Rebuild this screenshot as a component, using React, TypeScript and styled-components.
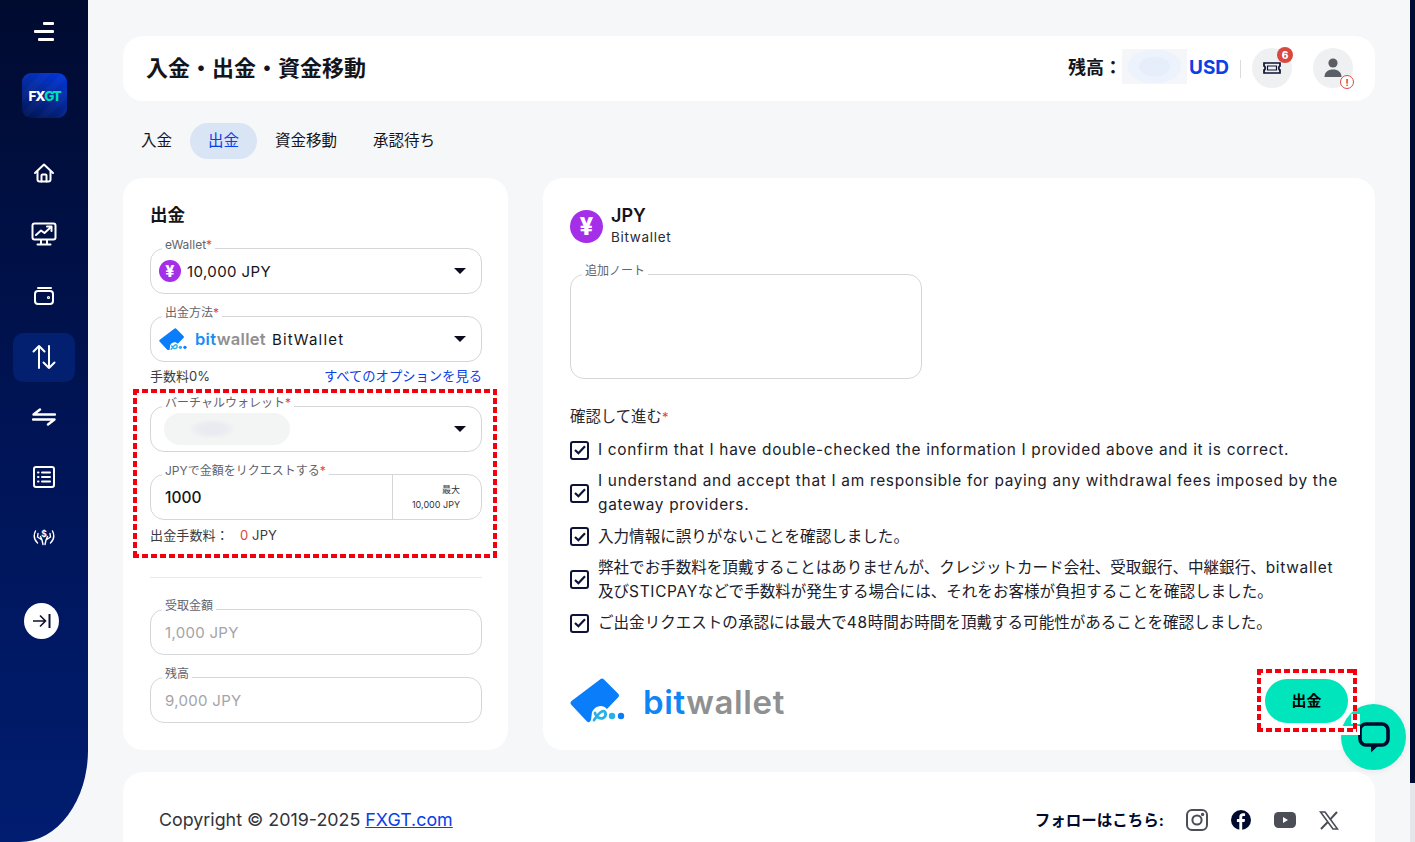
import React from "react";
import styled, { createGlobalStyle, css } from "styled-components";

const fontStack = `"Inter", "Noto Sans CJK JP", "Noto Sans", sans-serif`;

const GlobalStyle = createGlobalStyle`
  html, body {
    margin: 0;
    height: 100%;
    overflow: hidden;
    background: #f6f7f9;
  }
  * {
    box-sizing: border-box;
  }
  body {
    font-family: ${fontStack};
    color: #14141c;
  }
`;

// the square red dashes that mark up the screenshot
const redDashes = css`
  background:
    repeating-linear-gradient(90deg, #f3000f 0 6px, transparent 6px 9px) top / 100% 4px no-repeat,
    repeating-linear-gradient(90deg, #f3000f 0 6px, transparent 6px 9px) bottom / 100% 4px no-repeat,
    repeating-linear-gradient(180deg, #f3000f 0 6px, transparent 6px 9px) left / 4px 100% no-repeat,
    repeating-linear-gradient(180deg, #f3000f 0 6px, transparent 6px 9px) right / 4px 100% no-repeat;
`;

const Page = styled.div`
  display: flex;
  height: 842px;
  overflow: hidden;
  position: relative;
`;

const Sidebar = styled.aside`
  width: 88px;
  height: 842px;
  flex: none;
  display: flex;
  flex-direction: column;
  background: linear-gradient(to bottom, #000b30 0%, #001455 50%, #011d70 100%);
  border-bottom-right-radius: 68px 92px;
`;

const Burger = styled.button`
  all: unset;
  display: flex;
  flex-direction: column;
  align-items: flex-end;
  gap: 5px;
  width: 20px;
  margin: 22px 0 0 34px;
`;

const BurgerLine = styled.span<{ $w: number }>`
  display: block;
  width: ${(p) => p.$w}px;
  height: 3px;
  background: #fff;
  border-radius: 1px;
`;

const LogoTile = styled.div`
  width: 45px;
  height: 45px;
  margin: 32px 0 0 22px;
  border-radius: 9px;
  background:
    repeating-linear-gradient(135deg, rgba(255, 255, 255, 0.025) 0 7px, transparent 7px 14px),
    linear-gradient(205deg, #0037e0 0%, #042a9e 45%, #00124f 100%);
  display: flex;
  align-items: center;
  justify-content: center;
  font-size: 13.5px;
  font-weight: 800;
  letter-spacing: -1.3px;
  color: #fff;
  em {
    font-style: normal;
    color: #00e0b5;
  }
`;

const Nav = styled.nav`
  display: flex;
  flex-direction: column;
  gap: 11px;
  margin-top: 30px;
  padding: 0 13px;
`;

const NavItem = styled.a<{ $active?: boolean }>`
  height: 49px;
  flex: none;
  border-radius: 10px;
  display: flex;
  align-items: center;
  justify-content: center;
  color: #fff;
  background: ${(p) => (p.$active ? "#02206f" : "transparent")};
  &:nth-child(-n + 3) {
    margin-bottom: 1.5px;
  }
`;

const CollapseButton = styled.button`
  all: unset;
  width: 35px;
  height: 36px;
  margin: 41px 0 0 24px;
  border-radius: 50%;
  background: #fff;
  display: flex;
  align-items: center;
  justify-content: center;
`;

const Main = styled.main`
  flex: 1;
  min-width: 0;
  padding: 36px 40px 0 35px;
  display: flex;
  flex-direction: column;
`;

const Header = styled.header`
  height: 65px;
  flex: none;
  background: #fff;
  border-radius: 20px;
  padding: 0 22px 0 23px;
  display: flex;
  align-items: center;
`;

const PageTitle = styled.h1`
  flex: 1;
  margin: 0;
  padding-bottom: 6px;
  font-size: 22px;
  font-weight: 700;
`;

const BalanceLabel = styled.span`
  font-size: 18px;
  font-weight: 700;
  width: 54px;
  white-space: nowrap;
  padding-bottom: 6px;
`;

const HiddenBalance = styled.div`
  width: 65px;
  height: 35px;
  margin-bottom: 4px;
  background:
    radial-gradient(ellipse 27px 17px at center, #e7eefb 0, #e7eefb 55%, #edf3fd 60%, #edf3fd 99%, transparent 100%),
    #f5f6f9;
`;

const Currency = styled.span`
  font-size: 19px;
  font-weight: 700;
  color: #0b40e6;
  margin-left: 2px;
  width: 40px;
  padding-bottom: 3px;
`;

const VDivider = styled.span`
  width: 1px;
  height: 18px;
  background: #d9dbdf;
  margin: 0 11px 0 11px;
`;

const RoundIcon = styled.div`
  position: relative;
  width: 40px;
  height: 40px;
  margin-bottom: 1px;
  border-radius: 50%;
  background: #eff0f2;
  display: flex;
  align-items: center;
  justify-content: center;
`;

const Badge = styled.span`
  position: absolute;
  top: -1px;
  right: -1px;
  width: 16px;
  height: 16px;
  border-radius: 50%;
  background: #d9473f;
  color: #fff;
  font-size: 10px;
  font-weight: 800;
  display: flex;
  align-items: center;
  justify-content: center;
`;

const AlertDot = styled.span`
  position: absolute;
  right: -1px;
  bottom: -1px;
  width: 14px;
  height: 14px;
  border-radius: 50%;
  background: #fff;
  border: 1.5px solid #dc4a43;
  color: #dc4a43;
  font-size: 9px;
  font-weight: 800;
  display: flex;
  align-items: center;
  justify-content: center;
`;

const ProfileGap = styled.div`
  width: 21px;
`;

const Tabs = styled.div`
  display: flex;
  margin-top: 22px;
`;

const Tab = styled.a<{ $active?: boolean }>`
  height: 36px;
  padding: 0 18px 4px;
  border-radius: 18px;
  display: flex;
  align-items: center;
  font-size: 15.5px;
  color: ${(p) => (p.$active ? "#0b40e6" : "#14141c")};
  background: ${(p) => (p.$active ? "#d9e4f5" : "transparent")};
`;

const Columns = styled.div`
  display: flex;
  gap: 35px;
  margin-top: 19px;
`;

const Card = styled.section`
  background: #fff;
  border-radius: 20px;
`;

const LeftCard = styled(Card)`
  width: 385px;
  height: 572px;
  flex: none;
  padding: 27px 26px 0 27px;
`;

const CardTitle = styled.h2`
  margin: 0 0 16px;
  font-size: 17.5px;
  line-height: 20px;
  font-weight: 700;
`;

const Field = styled.fieldset<{ $mt?: number }>`
  margin: ${(p) => p.$mt ?? 15}px 0 0;
  padding: 0;
  border: 1px solid #d5d6d8;
  border-radius: 14px;
  min-width: 0;
`;

const Legend = styled.legend`
  position: relative;
  top: -3px;
  margin-left: 11px;
  padding: 0 3px;
  font-size: 12px;
  line-height: 14px;
  color: #63636b;
  i {
    color: #d9473f;
    font-style: normal;
  }
`;

const SelectRow = styled.div`
  height: 41px;
  padding: 0 15px 3px 8px;
  display: flex;
  align-items: center;
  gap: 6px;
  font-size: 15px;
  letter-spacing: 0.4px;
  margin-top: -3px;
`;

const WideText = styled.span`
  letter-spacing: 1.2px;
`;

const Caret = styled.span`
  margin-left: auto;
  width: 0;
  height: 0;
  border-left: 6px solid transparent;
  border-right: 6px solid transparent;
  border-top: 6px solid #0c0c20;
`;

const YenCircle = styled.span<{ $size: number }>`
  flex: none;
  width: ${(p) => p.$size}px;
  height: ${(p) => p.$size}px;
  border-radius: 50%;
  background: #a52ee8;
  color: #fff;
  font-weight: 800;
  font-size: ${(p) => Math.round(p.$size * 0.72)}px;
  display: flex;
  align-items: center;
  justify-content: center;
`;

const MiniWordmark = styled.span`
  font-size: 16.5px;
  font-weight: 600;
  letter-spacing: 0.3px;
  color: #8f9092;
  margin-left: 2px;
  b {
    color: #1b8cf5;
    font-weight: 600;
  }
`;

const FeeRow = styled.div`
  display: flex;
  justify-content: space-between;
  align-items: center;
  height: 16px;
  margin-top: 5px;
  font-size: 13px;
  color: #3a3a42;
  a {
    color: #0b40e6;
    font-size: 13.3px;
  }
`;

const Highlighted = styled.div`
  position: relative;
  margin-top: 16px;
  &::after {
    content: "";
    position: absolute;
    left: -17px;
    right: -15px;
    top: -10px;
    bottom: -15px;
    ${redDashes}
    pointer-events: none;
  }
`;

const BlurredValue = styled.div`
  width: 126px;
  height: 32px;
  margin-left: 5px;
  border-radius: 16px;
  background: radial-gradient(ellipse 24px 10px at 48px 50%, #e9ebf0 0 50%, #f3f4f4 100%);
`;

const AmountRow = styled.div`
  height: 45px;
  margin-top: -7px;
  display: flex;
  align-items: stretch;
`;

const AmountValue = styled.div`
  flex: 1;
  padding: 2px 0 0 14px;
  display: flex;
  align-items: center;
  font-size: 15.5px;
  font-weight: 500;
`;

const MaxBox = styled.div`
  width: 89px;
  border-left: 1px solid #d5d6d8;
  padding-right: 21px;
  display: flex;
  flex-direction: column;
  justify-content: center;
  align-items: flex-end;
  gap: 4px;
  font-size: 9px;
  line-height: 11px;
  color: #33333a;
`;

const WithdrawFee = styled.div`
  margin-top: 7px;
  font-size: 13px;
  line-height: 16px;
  letter-spacing: 0.15px;
  color: #3a3a42;
  b {
    margin-left: 11px;
    font-weight: 400;
    color: #d9473f;
  }
`;

const Divider = styled.hr`
  margin: 34px 0 24px;
  border: 0;
  border-top: 1px solid #e8e9eb;
`;

const ReadOnlyRow = styled.div`
  height: 41px;
  padding: 0 14px 3px;
  margin-top: -3px;
  display: flex;
  align-items: center;
  font-size: 15px;
  letter-spacing: 0.3px;
  color: #a3a4a8;
`;

const RightCard = styled(Card)`
  flex: 1;
  height: 572px;
  padding: 27px 27px 0;
  position: relative;
`;

const CurrencyHead = styled.div`
  display: flex;
  align-items: center;
  gap: 8px;
`;

const CurrencyName = styled.div`
  font-size: 18px;
  line-height: 22px;
  font-weight: 600;
`;

const CurrencySub = styled.div`
  font-size: 13.5px;
  line-height: 20px;
  letter-spacing: 0.7px;
  color: #2a2a32;
`;

const NoteField = styled(Field)`
  width: 352px;
  margin-top: 20px;
`;

const NoteBody = styled.div`
  height: 97px;
`;

const ConfirmTitle = styled.div`
  margin-top: 29px;
  font-size: 15.4px;
  line-height: 18px;
  color: #2a2a32;
  i {
    color: #d9473f;
    font-style: normal;
    font-size: 13px;
  }
`;

const ChecklistWrap = styled.div`
  display: flex;
  flex-direction: column;
  gap: 7.25px;
  margin-top: 12px;
`;

const CheckRow = styled.label`
  display: flex;
  align-items: center;
  gap: 9px;
  font-size: 15.55px;
  line-height: 24px;
  color: #20202a;
`;

const Latin = styled.span`
  font-size: 15.4px;
  letter-spacing: 0.7px;
`;

const CheckBox = styled.span`
  flex: none;
  width: 19px;
  height: 19px;
  border: 2px solid #0c1238;
  border-radius: 3px;
  display: flex;
  align-items: center;
  justify-content: center;
`;

const BottomRow = styled.div`
  display: flex;
  align-items: center;
  justify-content: space-between;
  margin-top: 43px;
`;

const BigLogo = styled.div`
  display: flex;
  align-items: center;
  gap: 18px;
`;

const BigWordmark = styled.span`
  padding-top: 2px;
  font-size: 33px;
  font-weight: 600;
  letter-spacing: 0.6px;
  color: #8f9092;
  b {
    color: #0f86f5;
    font-weight: 600;
  }
`;

const SubmitWrap = styled.div`
  position: relative;
  &::before {
    content: "";
    position: absolute;
    left: 75px;
    top: 35px;
    width: 20px;
    height: 21px;
    background:
      linear-gradient(#fff, #fff) right top / 9px 10px no-repeat,
      linear-gradient(#fff, #fff) left bottom / 100% 9px no-repeat;
    z-index: 3;
  }
  &::after {
    content: "";
    position: absolute;
    left: -8px;
    right: -9px;
    top: -10px;
    bottom: -9px;
    ${redDashes}
    pointer-events: none;
    z-index: 3;
  }
`;

const SubmitButton = styled.button`
  all: unset;
  width: 83px;
  height: 44px;
  padding-bottom: 3px;
  box-sizing: border-box;
  border-radius: 22px;
  background: #00e5bb;
  color: #000;
  font-size: 15px;
  font-weight: 700;
  display: flex;
  align-items: center;
  justify-content: center;
`;

const Footer = styled(Card)`
  height: 120px;
  flex: none;
  margin-top: 22px;
  padding: 33px 36px 0;
  display: flex;
  align-items: flex-start;
  justify-content: space-between;
`;

const Copyright = styled.div`
  font-size: 17.85px;
  line-height: 30px;
  color: #33333a;
  a {
    color: #0b40e6;
    text-decoration: underline;
  }
`;

const FollowRow = styled.div`
  display: flex;
  align-items: center;
  height: 30px;
  gap: 23px;
`;

const FollowLabel = styled.span`
  font-size: 15.5px;
  font-weight: 700;
  color: #000a2e;
  padding-bottom: 3px;
  margin-right: -1px;
`;

const ChatBubble = styled.div`
  position: absolute;
  left: 1341px;
  top: 704px;
  width: 65px;
  height: 66px;
  border-radius: 50%;
  background: #00e5bb;
  box-shadow: 0 1px 6px rgba(0, 0, 0, 0.08);
  display: flex;
  align-items: center;
  justify-content: center;
  z-index: 2;
`;

const ScrollTrack = styled.div`
  position: absolute;
  top: 0;
  right: 0;
  width: 5px;
  height: 842px;
  background: #e4e6ec;
`;

const ScrollThumb = styled.div`
  width: 5px;
  height: 783px;
  background: #000b30;
`;

const stroke = { fill: "none", stroke: "currentColor", strokeWidth: 2, strokeLinecap: "round", strokeLinejoin: "round" } as const;

const HomeIcon = () => (
  <svg width="22" height="22" viewBox="0 0 22 22" {...stroke}>
    <path d="M2 11 L11 2.5 L20 11" />
    <path d="M4.5 9.5 V17.5 a2 2 0 0 0 2 2 H15.5 a2 2 0 0 0 2-2 V9.5" />
    <path d="M8.5 19.5 V13.5 a1 1 0 0 1 1-1 h3 a1 1 0 0 1 1 1 V19.5" />
  </svg>
);

const MonitorIcon = () => (
  <svg width="26" height="24" viewBox="0 0 26 24" {...stroke}>
    <rect x="1.5" y="1.5" width="23" height="16" rx="2" />
    <path d="M5 13 L10 8.5 L13.5 11 L20 5" />
    <path d="M16 4.5 H20.5 V9" />
    <path d="M10 18 V22 M16 18 V22 M6.5 22.5 H19.5" />
  </svg>
);

const WalletIcon = () => (
  <svg width="22" height="20" viewBox="0 0 22 20" {...stroke}>
    <path d="M5 2 H18" />
    <rect x="2" y="5" width="18" height="13" rx="3" />
    <circle cx="15.5" cy="11.5" r="0.6" />
  </svg>
);

const TransferIcon = () => (
  <svg width="24" height="26" viewBox="0 0 24 26" {...stroke}>
    <path d="M7 24 V2 M1.5 7.5 L7 2 L12.5 7.5" />
    <path d="M17 2 V24 M11.5 18.5 L17 24 L22.5 18.5" />
  </svg>
);

const SwapIcon = () => (
  <svg width="24" height="18" viewBox="0 0 24 18" {...stroke} strokeWidth="2.4">
    <path d="M23 6.5 H1.5 L8 1.5" />
    <path d="M1 11.5 H22.5 L16 16.5" />
  </svg>
);

const ListIcon = () => (
  <svg width="24" height="24" viewBox="0 0 24 24" {...stroke}>
    <rect x="2" y="2" width="20" height="20" rx="2" />
    <path d="M10 7.5 H18 M10 12 H18 M10 16.5 H18" />
    <path d="M6 7.5 H6.5 M6 12 H6.5 M6 16.5 H6.5" />
  </svg>
);

const HandsIcon = () => (
  <svg width="22" height="17" viewBox="0 0 22 17" fill="none" stroke="currentColor" strokeWidth="1.4" strokeLinecap="round" strokeLinejoin="round">
    <path d="M2.5 2 C0.5 6 1 10.5 4.5 14" />
    <path d="M19.5 2 C21.5 6 21 10.5 17.5 14" />
    <path d="M5 4.5 L4.5 8 L9 11 L10 15.5 M9 11 L7.5 7.5" />
    <path d="M17 4.5 L17.5 8 L13 11 L12 15.5 M13 11 L14.5 7.5" />
    <text x="11" y="7.5" fontSize="8.5" fontWeight="700" fontFamily="Inter" textAnchor="middle" fill="currentColor" stroke="none">$</text>
  </svg>
);

const CollapseIcon = () => (
  <svg width="18" height="14" viewBox="0 0 18 14" fill="none" stroke="#0c1230" strokeWidth="1.6">
    <path d="M0 7 H12 M7 1.5 L12.5 7 L7 12.5" />
    <path d="M16.5 0 V14" strokeWidth="2" />
  </svg>
);

const TicketIcon = () => (
  <svg width="18" height="14" viewBox="0 0 18 14" fill="none" stroke="#0c1230" strokeWidth="1.7">
    <path d="M1 2 H17 V5 C15.5 5 15.5 9 17 9 V12 H1 V9 C2.5 9 2.5 5 1 5 Z" />
    <path d="M4.5 5 H13.5 V9 H4.5 Z" strokeWidth="1.2" />
  </svg>
);

const UserIcon = () => (
  <svg width="18" height="20" viewBox="0 0 18 20" fill="#5c5e66">
    <circle cx="9" cy="5" r="4.6" />
    <path d="M0.5 19 C0.5 14 4 11.5 9 11.5 C14 11.5 17.5 14 17.5 19 Z" />
  </svg>
);

const CheckMark = () => (
  <svg width="12" height="10" viewBox="0 0 12 10" fill="none" stroke="#0c1238" strokeWidth="2.2">
    <path d="M1 5 L4.4 8.2 L11 1.2" />
  </svg>
);

const BitwalletMark = ({ size }: { size: number }) => (
  <svg width={size} height={size * 0.82} viewBox="0 0 55 45">
    <path d="M30 1.5 Q32 -0.5 34 1.5 L48 15.5 Q50 17.5 48 19.5 L37 31 C33 26 25 27 22 34 L21 42 Q19 45.5 17 43.5 L1.5 27 Q-0.5 25 1.5 23 Z" fill="#0a7dfb" />
    <path d="M24 42 C27 38 30 33 33 33 C36 33 37 38 33 40 C30 41 26 39 25 35" fill="none" stroke="#27b1e8" strokeWidth="2.8" strokeLinecap="round" />
    <circle cx="42" cy="38" r="3.2" fill="#27b1e8" />
    <circle cx="51" cy="38" r="3.2" fill="#0a7dfb" />
  </svg>
);

const InstagramIcon = () => (
  <svg width="22" height="22" viewBox="0 0 22 22" fill="none" stroke="#4b4d57" strokeWidth="2">
    <rect x="1" y="1" width="20" height="20" rx="5" />
    <circle cx="11" cy="11" r="4.6" />
    <circle cx="16.6" cy="5.4" r="0.7" fill="#4b4d57" />
  </svg>
);

const FacebookIcon = () => (
  <svg width="20" height="20" viewBox="0 0 20 20">
    <circle cx="10" cy="10" r="10" fill="#000a2e" />
    <path d="M11.2 20 V12 H13.6 L14 9 H11.2 V7.4 C11.2 6.5 11.5 6 12.6 6 H14.1 V3.4 C13.6 3.3 12.8 3.2 11.9 3.2 C9.8 3.2 8.3 4.5 8.3 6.9 V9 H5.9 V12 H8.3 V20 Z" fill="#fff" />
  </svg>
);

const YoutubeIcon = () => (
  <svg width="22" height="16" viewBox="0 0 22 16">
    <rect width="22" height="16" rx="4.5" fill="#4b4d57" />
    <path d="M9 5 L14 8 L9 11 Z" fill="#fff" />
  </svg>
);

const XIcon = () => (
  <svg width="20" height="19" viewBox="0 0 20 19" fill="none" stroke="#4b4d57">
    <path d="M1.5 1 H6 L18.5 18 H14 Z" strokeWidth="1.6" />
    <path d="M18 1 L11 8.7 M9 10.8 L2 18" strokeWidth="2" />
  </svg>
);

const ChatIcon = () => (
  <svg width="32" height="31" viewBox="0 0 32 31" fill="none">
    <path d="M8 2 H24 A6 6 0 0 1 30 8 V17 A6 6 0 0 1 24 23 H8 A6 6 0 0 1 2 17 V8 A6 6 0 0 1 8 2 Z" stroke="#000a2e" strokeWidth="3.6" />
    <path d="M13 22 V30.5 L22 22 Z" fill="#000a2e" />
  </svg>
);

const checks: React.ReactNode[] = [
  <Latin key="a">I confirm that I have double-checked the information I provided above and it is correct.</Latin>,
  <Latin key="b">I understand and accept that I am responsible for paying any withdrawal fees imposed by the gateway providers.</Latin>,
  <span key="c">入力情報に誤りがないことを確認しました。</span>,
  <span key="d">
    弊社でお手数料を頂戴することはありませんが、クレジットカード会社、受取銀行、中継銀行、<Latin>bitwallet</Latin>
    <br />
    及び<Latin>STICPAY</Latin>などで手数料が発生する場合には、それをお客様が負担することを確認しました。
  </span>,
  <span key="e">
    ご出金リクエストの承認には最大で<Latin>48</Latin>時間お時間を頂戴する可能性があることを確認しました。
  </span>,
];

const navIcons = [
  <HomeIcon key="home" />,
  <MonitorIcon key="monitor" />,
  <WalletIcon key="wallet" />,
  <TransferIcon key="transfer" />,
  <SwapIcon key="swap" />,
  <ListIcon key="list" />,
  <HandsIcon key="hands" />,
];

export default function App() {
  return (
    <Page>
      <GlobalStyle />
      <Sidebar>
        <Burger>
          <BurgerLine $w={11} />
          <BurgerLine $w={20} />
          <BurgerLine $w={16} />
        </Burger>
        <LogoTile>
          FX<em>GT</em>
        </LogoTile>
        <Nav>
          {navIcons.map((icon, i) => (
            <NavItem key={i} $active={i === 3}>
              {icon}
            </NavItem>
          ))}
        </Nav>
        <CollapseButton>
          <CollapseIcon />
        </CollapseButton>
      </Sidebar>

      <Main>
        <Header>
          <PageTitle>入金・出金・資金移動</PageTitle>
          <BalanceLabel>残高：</BalanceLabel>
          <HiddenBalance />
          <Currency>USD</Currency>
          <VDivider />
          <RoundIcon>
            <TicketIcon />
            <Badge>6</Badge>
          </RoundIcon>
          <ProfileGap />
          <RoundIcon>
            <UserIcon />
            <AlertDot>!</AlertDot>
          </RoundIcon>
        </Header>

        <Tabs>
          <Tab>入金</Tab>
          <Tab $active>出金</Tab>
          <Tab>資金移動</Tab>
          <Tab>承認待ち</Tab>
        </Tabs>

        <Columns>
          <LeftCard>
            <CardTitle>出金</CardTitle>
            <Field $mt={0}>
              <Legend>
                eWallet<i>*</i>
              </Legend>
              <SelectRow>
                <YenCircle $size={22}>¥</YenCircle>
                10,000 JPY
                <Caret />
              </SelectRow>
            </Field>
            <Field>
              <Legend>
                出金方法<i>*</i>
              </Legend>
              <SelectRow>
                <BitwalletMark size={28} />
                <MiniWordmark>
                  <b>bit</b>wallet
                </MiniWordmark>
                <WideText>BitWallet</WideText>
                <Caret />
              </SelectRow>
            </Field>
            <FeeRow>
              <span>手数料0%</span>
              <a>すべてのオプションを見る</a>
            </FeeRow>
            <Highlighted>
              <Field $mt={0}>
                <Legend>
                  バーチャルウォレット<i>*</i>
                </Legend>
                <SelectRow>
                  <BlurredValue />
                  <Caret />
                </SelectRow>
              </Field>
              <Field>
                <Legend>
                  JPYで金額をリクエストする<i>*</i>
                </Legend>
                <AmountRow>
                  <AmountValue>1000</AmountValue>
                  <MaxBox>
                    <span>最大</span>
                    <span>10,000 JPY</span>
                  </MaxBox>
                </AmountRow>
              </Field>
              <WithdrawFee>
                出金手数料：<b>0</b> JPY
              </WithdrawFee>
            </Highlighted>
            <Divider />
            <Field $mt={0}>
              <Legend>受取金額</Legend>
              <ReadOnlyRow>1,000 JPY</ReadOnlyRow>
            </Field>
            <Field>
              <Legend>残高</Legend>
              <ReadOnlyRow>9,000 JPY</ReadOnlyRow>
            </Field>
          </LeftCard>

          <RightCard>
            <CurrencyHead>
              <YenCircle $size={33}>¥</YenCircle>
              <div>
                <CurrencyName>JPY</CurrencyName>
                <CurrencySub>Bitwallet</CurrencySub>
              </div>
            </CurrencyHead>
            <NoteField>
              <Legend>追加ノート</Legend>
              <NoteBody />
            </NoteField>
            <ConfirmTitle>
              確認して進む<i>*</i>
            </ConfirmTitle>
            <ChecklistWrap>
              {checks.map((content, i) => (
                <CheckRow key={i}>
                  <CheckBox>
                    <CheckMark />
                  </CheckBox>
                  {content}
                </CheckRow>
              ))}
            </ChecklistWrap>
            <BottomRow>
              <BigLogo>
                <BitwalletMark size={55} />
                <BigWordmark>
                  <b>bit</b>wallet
                </BigWordmark>
              </BigLogo>
              <SubmitWrap>
                <SubmitButton>出金</SubmitButton>
              </SubmitWrap>
            </BottomRow>
          </RightCard>
        </Columns>

        <Footer>
          <Copyright>
            Copyright © 2019-2025 <a>FXGT.com</a>
          </Copyright>
          <FollowRow>
            <FollowLabel>フォローはこちら:</FollowLabel>
            <InstagramIcon />
            <FacebookIcon />
            <YoutubeIcon />
            <XIcon />
          </FollowRow>
        </Footer>
      </Main>

      <ChatBubble>
        <ChatIcon />
      </ChatBubble>
      <ScrollTrack>
        <ScrollThumb />
      </ScrollTrack>
    </Page>
  );
}
